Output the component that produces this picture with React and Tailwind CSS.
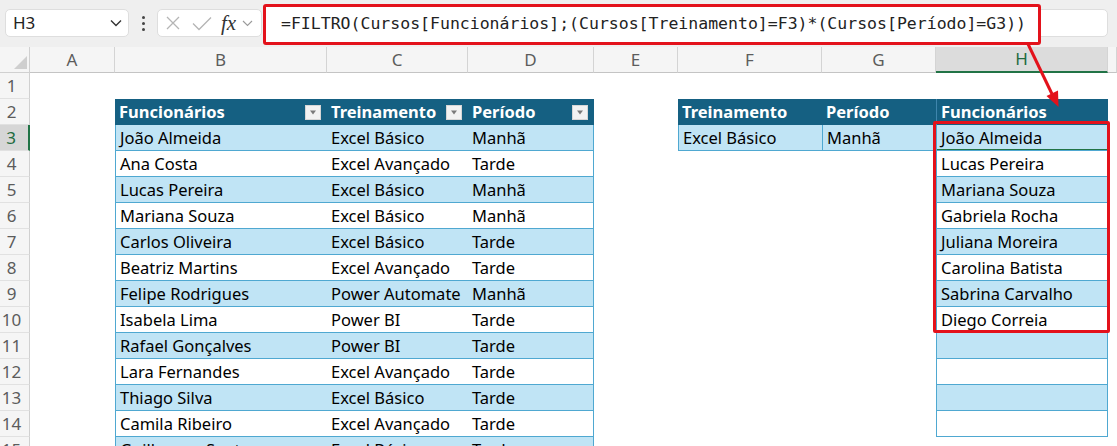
import React from "react";

const FONT = { fontFamily: '"Noto Sans", "Open Sans", Arial, sans-serif' };

const COLS = [
  { k: "A", w: "w-[85px]" },
  { k: "B", w: "w-[212px]" },
  { k: "C", w: "w-[141px]" },
  { k: "D", w: "w-[126px]" },
  { k: "E", w: "w-[84px]" },
  { k: "F", w: "w-[144px]" },
  { k: "G", w: "w-[114px]" },
  { k: "H", w: "w-[172px]" },
  { k: "I", w: "w-[9px]" },
];

const LEFT = [
  ["João Almeida", "Excel Básico", "Manhã"],
  ["Ana Costa", "Excel Avançado", "Tarde"],
  ["Lucas Pereira", "Excel Básico", "Manhã"],
  ["Mariana Souza", "Excel Básico", "Manhã"],
  ["Carlos Oliveira", "Excel Básico", "Tarde"],
  ["Beatriz Martins", "Excel Avançado", "Tarde"],
  ["Felipe Rodrigues", "Power Automate", "Manhã"],
  ["Isabela Lima", "Power BI", "Tarde"],
  ["Rafael Gonçalves", "Power BI", "Tarde"],
  ["Lara Fernandes", "Excel Avançado", "Tarde"],
  ["Thiago Silva", "Excel Básico", "Tarde"],
  ["Camila Ribeiro", "Excel Avançado", "Tarde"],
  ["Guilherme Santos", "Excel Básico", "Tarde"],
];

const RESULT = [
  "João Almeida",
  "Lucas Pereira",
  "Mariana Souza",
  "Gabriela Rocha",
  "Juliana Moreira",
  "Carolina Batista",
  "Sabrina Carvalho",
  "Diego Correia",
];

const LIGHT = "bg-[#c0e4f5]";
const LINE = "border-[#4fa8d1]";
const HEAD = "bg-[#156082]";

function FilterBtn() {
  return (
    <div className="ml-auto mr-[4px] w-[16px] h-[15px] bg-[#f2f2f2] border border-[#d6d6d6] flex items-center justify-center shrink-0">
      <svg width="8" height="5" viewBox="0 0 8 5">
        <path d="M1 0.5 L7 0.5 L4 4.5 Z" fill="#7a7a7a" />
      </svg>
    </div>
  );
}

function RowHeader({ n, active }) {
  return (
    <div
      className={
        "w-[30px] h-[26px] shrink-0 flex items-center justify-center pr-[6px] text-[17px] border-b border-[#e1e1e1] " +
        (active
          ? "bg-[#d6d6d6] text-[#1f6b40] border-r-2 border-r-[#217346]"
          : "bg-[#f5f5f5] text-[#5c5c5c] border-r border-r-[#d0d0d0]")
      }
    >
      {n}
    </div>
  );
}

function Cell({ w, className = "", children }) {
  return (
    <div className={`${w} h-[26px] shrink-0 flex items-center pl-[4px] pr-[2px] pt-[1px] text-[16.5px] text-black whitespace-nowrap overflow-hidden ${className}`}>
      {children}
    </div>
  );
}

function DataRow({ r }) {
  const li = r - 3;
  const left = LEFT[li];
  const leftBand = r % 2 === 1 ? LIGHT : "bg-white";
  const hasLeft = !!left;
  const lb = hasLeft ? `${leftBand} border-b ${LINE}` : "";
  const hBand = r % 2 === 1 ? LIGHT : "bg-white";
  const hasH = r <= 14;
  return (
    <div className="flex">
      <RowHeader n={r} active={r === 3} />
      <Cell w="w-[85px]" />
      <Cell w="w-[212px]" className={hasLeft ? `${lb} border-l` : ""}>
        {left && left[0]}
      </Cell>
      <Cell w="w-[141px]" className={lb}>
        {left && left[1]}
      </Cell>
      <Cell w="w-[126px]" className={hasLeft ? `${lb} border-r` : ""}>
        {left && left[2]}
      </Cell>
      <Cell w="w-[84px]" />
      <Cell w="w-[144px]" className={r === 3 ? `${LIGHT} border-b border-l ${LINE}` : ""}>
        {r === 3 && "Excel Básico"}
      </Cell>
      <Cell w="w-[114px]" className={r === 3 ? `${LIGHT} border-b border-l ${LINE}` : ""}>
        {r === 3 && "Manhã"}
      </Cell>
      <Cell
        w="w-[172px]"
        className={hasH ? `${hBand} border-b border-l border-r ${LINE} relative` : ""}
      >
        {RESULT[li] || ""}
        {r === 3 && (
          <div className="absolute left-0 right-0 bottom-[-1px] h-[2px] bg-[#217346]" />
        )}
      </Cell>
      <Cell w="w-[9px]" />
    </div>
  );
}

export default function App() {
  return (
    <div className="w-[1117px] h-[446px] overflow-hidden relative bg-white" style={FONT}>
      {/* Formula bar */}
      <div className="h-[47px] bg-[#efefef] flex items-center pl-[5px] pb-[1px]">
        <div className="w-[124px] h-[28px] bg-white border border-[#dedede] rounded-[5px] flex items-center pl-[7px] pr-[6px] text-[17px] text-[#222]">
          <span>H3</span>
          <svg className="ml-auto" width="12" height="8" viewBox="0 0 12 8">
            <path d="M1 1.5 L6 6.5 L11 1.5" fill="none" stroke="#333" strokeWidth="1.4" />
          </svg>
        </div>
        <div className="w-[28px] flex flex-col items-center justify-center gap-[3px]">
          <div className="w-[3px] h-[3px] rounded-full bg-[#444]" />
          <div className="w-[3px] h-[3px] rounded-full bg-[#444]" />
          <div className="w-[3px] h-[3px] rounded-full bg-[#444]" />
        </div>
        <div className="w-[105px] h-[28px] bg-white border border-[#dedede] rounded-[5px] flex items-center pl-[7px]">
          <svg width="16" height="16" viewBox="0 0 16 16">
            <path d="M2 2 L14 14 M14 2 L2 14" stroke="#b5b5b5" strokeWidth="1.3" fill="none" />
          </svg>
          <svg className="ml-[11px]" width="20" height="15" viewBox="0 0 20 15">
            <path d="M1 7.5 L7 13.5 L19 1.5" stroke="#b5b5b5" strokeWidth="1.3" fill="none" />
          </svg>
          <span
            className="ml-[9px] text-[21px] italic text-[#333] leading-none"
            style={{ fontFamily: '"Liberation Serif", "DejaVu Serif", serif' }}
          >
            fx
          </span>
          <svg className="ml-[6px]" width="11" height="7" viewBox="0 0 11 7">
            <path d="M1 1 L5.5 5.5 L10 1" fill="none" stroke="#9a9a9a" strokeWidth="1.1" />
          </svg>
        </div>
        <div className="ml-[6px] w-[840px] h-[28px] bg-white border border-[#dedede] rounded-[5px]" />
      </div>

      {/* Column headers */}
      <div className="flex h-[26px]">
        <div className="w-[30px] shrink-0 bg-[#f5f5f5] border-r border-b border-[#d0d0d0] relative">
          <svg className="absolute right-[2px] bottom-[3px]" width="13" height="13" viewBox="0 0 13 13">
            <path d="M13 0 L13 13 L0 13 Z" fill="#cfcfcf" />
          </svg>
        </div>
        {COLS.map((c) => (
          <div
            key={c.k}
            className={
              `${c.w} shrink-0 flex items-center justify-center text-[17px] border-r border-[#d4d4d4] ` +
              (c.k === "H"
                ? "bg-[#dcdcdc] text-[#1f6b40] border-b-2 border-b-[#217346]"
                : "bg-[#f5f5f5] text-[#5c5c5c] border-b border-b-[#c4c4c4]")
            }
          >
            {c.k === "I" ? "" : c.k}
          </div>
        ))}
      </div>

      {/* Row 1 */}
      <div className="flex">
        <RowHeader n={1} />
        <div className="flex-1 h-[26px]" />
      </div>

      {/* Row 2: headers */}
      <div className="flex">
        <RowHeader n={2} />
        <Cell w="w-[85px]" />
        <Cell w="w-[212px]" className={`${HEAD} font-bold`}>
          <span className="text-white">Funcionários</span>
          <FilterBtn />
        </Cell>
        <Cell w="w-[141px]" className={`${HEAD} font-bold`}>
          <span className="text-white">Treinamento</span>
          <FilterBtn />
        </Cell>
        <Cell w="w-[126px]" className={`${HEAD} font-bold`}>
          <span className="text-white">Período</span>
          <FilterBtn />
        </Cell>
        <Cell w="w-[84px]" />
        <Cell w="w-[144px]" className={`${HEAD} font-bold`}>
          <span className="text-white">Treinamento</span>
        </Cell>
        <Cell w="w-[114px]" className={`${HEAD} font-bold`}>
          <span className="text-white">Período</span>
        </Cell>
        <Cell w="w-[172px]" className={`${HEAD} font-bold border-l border-[#3f86ad]`}>
          <span className="text-white">Funcionários</span>
        </Cell>
        <Cell w="w-[9px]" />
      </div>

      {Array.from({ length: 13 }, (_, i) => (
        <DataRow key={i} r={i + 3} />
      ))}

      {/* Annotations */}
      <div
        className="absolute left-[263px] top-[4px] w-[778px] h-[41px] bg-white border-[3px] border-[#e3121b] rounded-[3px] flex items-center pl-[15px] text-[16.5px] text-[#222] whitespace-nowrap"
        style={{ fontFamily: '"DejaVu Sans Mono", "Liberation Mono", monospace' }}
      >
        =FILTRO(Cursos[Funcionários];(Cursos[Treinamento]=F3)*(Cursos[Período]=G3))
      </div>
      <div className="absolute left-[933px] top-[121px] w-[177px] h-[212px] border-[3px] border-[#e3121b] rounded-[2px] pointer-events-none" />
      <svg className="absolute left-0 top-0 pointer-events-none" width="1117" height="446">
        <line x1="1028" y1="44" x2="1052" y2="94" stroke="#e3121b" strokeWidth="3" />
        <path d="M1058.5 107 L1058 90.5 L1046.5 96 Z" fill="#e3121b" />
      </svg>
    </div>
  );
}
